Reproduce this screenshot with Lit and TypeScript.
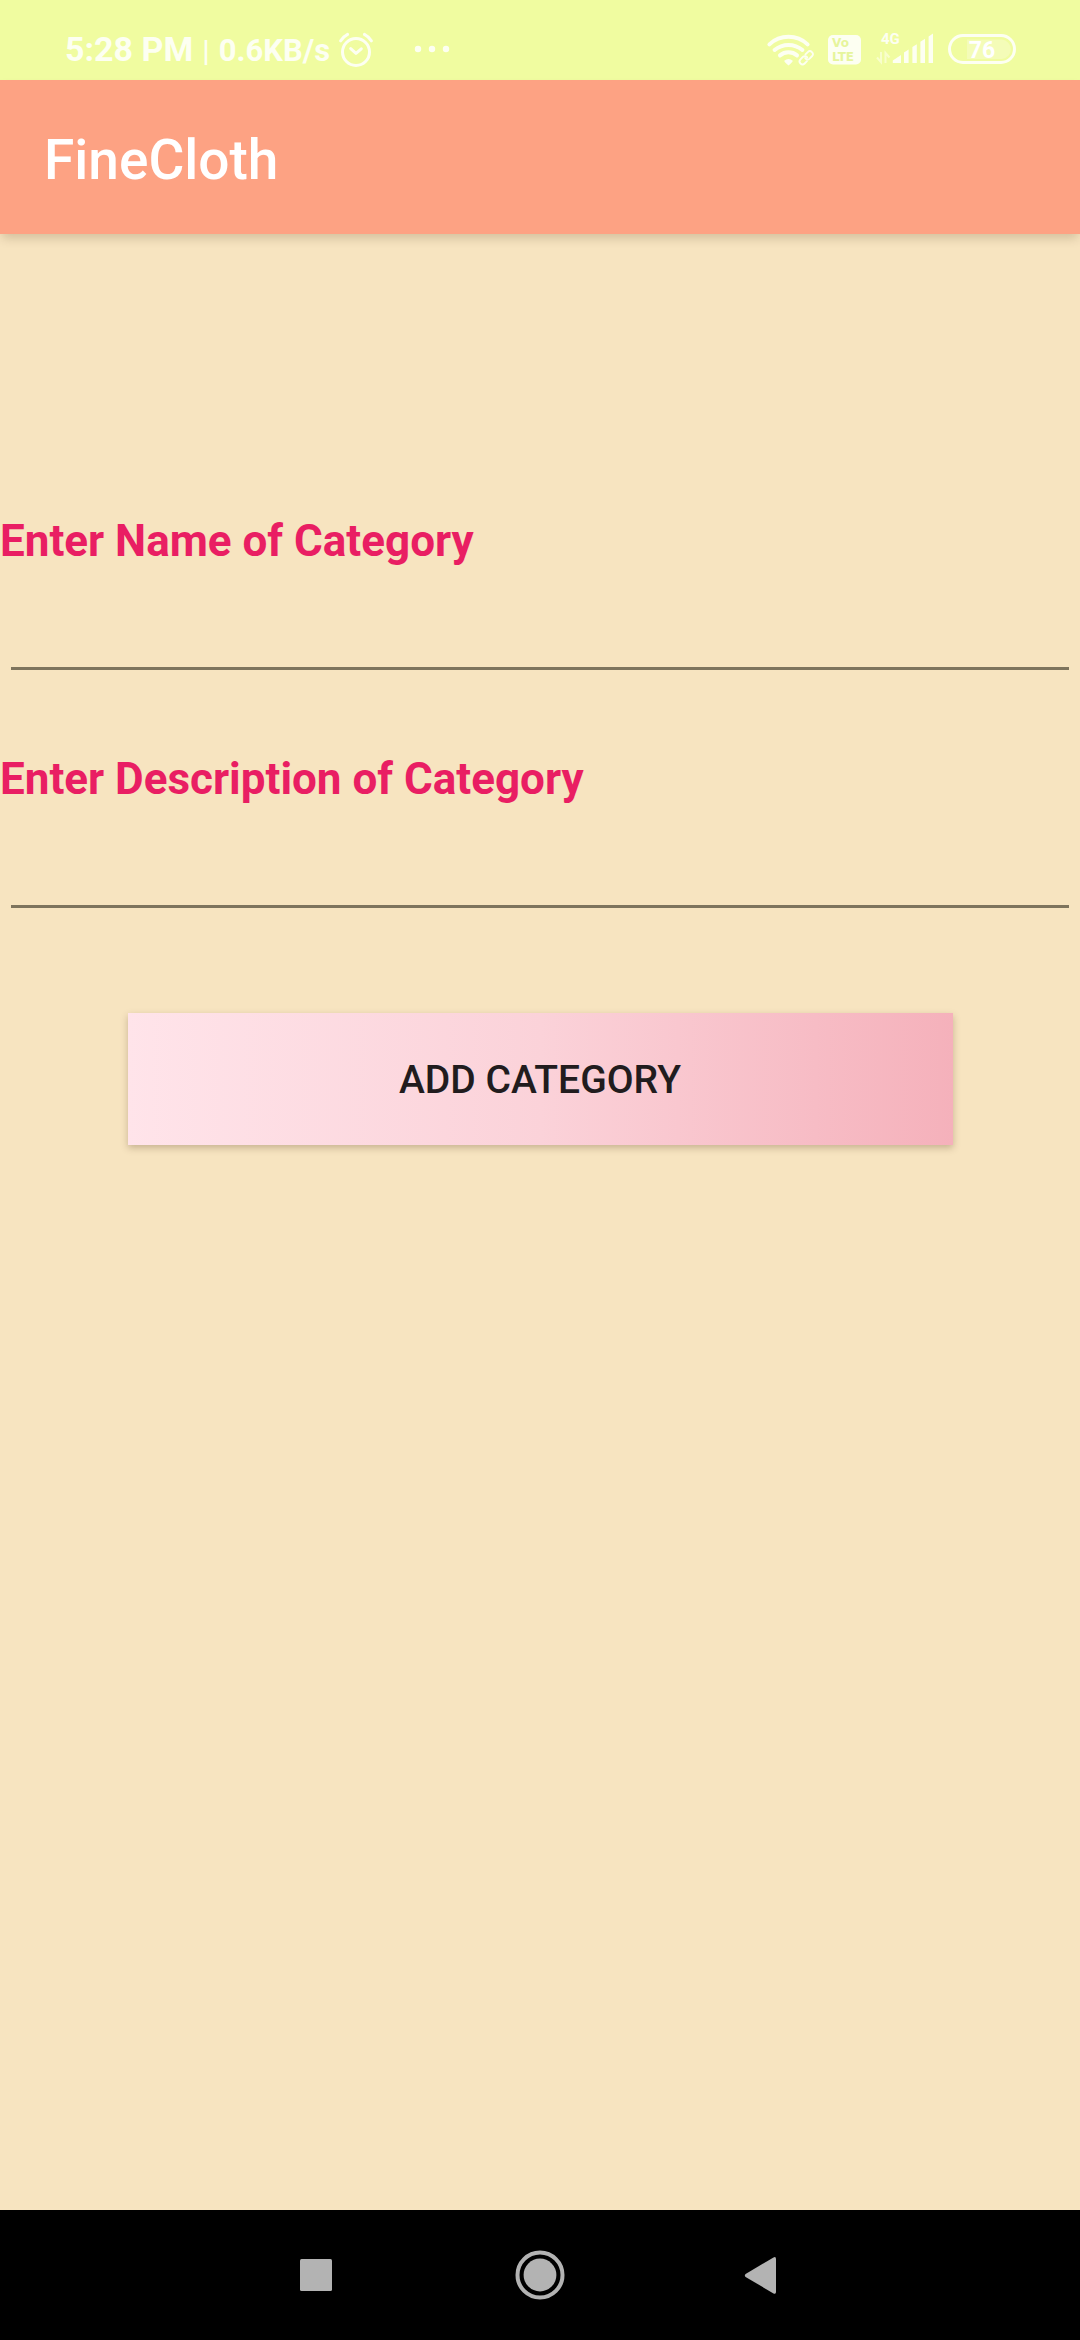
import { LitElement, html, css } from "lit";
import { customElement, property, state } from "lit/decorators.js";

@customElement("status-bar")
class StatusBar extends LitElement {
  static styles = css`
    :host {
      display: flex;
      justify-content: space-between;
      align-items: center;
      box-sizing: border-box;
      height: 80px;
      padding: 20px 64px 0 65px;
      background: #f0fca0;
      color: #fdfff2;
      font-family: Roboto, sans-serif;
      font-weight: 700;
    }
    .group {
      display: flex;
      align-items: center;
    }
    .readout {
      display: flex;
      align-items: baseline;
      gap: 9px;
      margin-right: 8px;
      line-height: 40px;
    }
    .time {
      font-size: 34px;
    }
    .rate {
      font-size: 31px;
    }
    .divider {
      font-size: 30px;
      font-weight: 500;
    }
    .dots {
      margin-left: 38px;
    }
    .indicators {
      gap: 14px;
    }
    svg {
      display: block;
      flex: none;
    }
    .line {
      fill: none;
      stroke: currentColor;
      stroke-linecap: round;
      stroke-linejoin: round;
    }
    .solid {
      fill: currentColor;
    }
    .faint {
      fill: none;
      stroke: #f8fecc;
      stroke-width: 2;
    }
    .gap {
      fill: #f0fca0;
      stroke: #f0fca0;
      stroke-width: 4;
    }
    .charge {
      fill: #f4fcb8;
    }
    .volte {
      fill: #e6f59c;
      font: 700 12px "DejaVu Sans", sans-serif;
    }
    .network {
      fill: currentColor;
      font: 700 15px Roboto, sans-serif;
    }
    .level {
      fill: #fff;
      font: 700 23px Roboto, sans-serif;
      text-anchor: middle;
    }
  `;

  render() {
    return html`
      <div class="group">
        <div class="readout">
          <span class="time">5:28 PM</span><span class="divider">|</span><span class="rate">0.6KB/s</span>
        </div>
        <svg width="36" height="36" viewBox="0 0 36 36" aria-hidden="true">
          <g class="line" stroke-width="3">
            <circle cx="18" cy="20" r="13.5"></circle>
            <path d="M12.7 16.6 18 21.4 23.3 16.8"></path>
            <path d="M2.6 8.8 Q5.4 4.6 9.6 2.4M26.4 2.4 Q30.6 4.6 33.4 8.8"></path>
          </g>
        </svg>
        <svg class="dots" width="38" height="36" viewBox="0 0 38 36" aria-hidden="true">
          <g class="solid">
            <circle cx="6" cy="17" r="3.2"></circle>
            <circle cx="20" cy="17" r="3.2"></circle>
            <circle cx="34" cy="17" r="3.2"></circle>
          </g>
        </svg>
      </div>
      <div class="group indicators">
        <svg width="48" height="36" viewBox="0 0 48 36" aria-hidden="true">
          <g class="line" stroke-width="4">
            <path d="M3.4 12.4A28 28 0 0 1 41.6 12.4"></path>
            <path d="M8.6 18A21.5 21.5 0 0 1 36.4 18"></path>
            <path d="M14 23.4A13.4 13.4 0 0 1 31 23.4"></path>
          </g>
          <path class="solid" d="M18.2 28.8Q22.5 25.4 26.8 28.8 26.4 30.4 22.5 33.4 18.6 30.4 18.2 28.8Z"></path>
          <g transform="translate(40.2 25.8) rotate(-45) scale(0.92)">
            <rect class="gap" x="-9" y="-3.2" width="18" height="6.4" rx="3.2"></rect>
            <g class="line" stroke-width="2">
              <path d="M-2 3.2H-5.6A3.2 3.2 0 0 1 -5.6 -3.2H-1.6A3 3 0 0 1 1 0.6"></path>
              <path d="M2 -3.2H5.6A3.2 3.2 0 0 1 5.6 3.2H1.6A3 3 0 0 1 -1 -0.6"></path>
            </g>
          </g>
        </svg>
        <svg width="34" height="36" viewBox="0 0 34 36" aria-hidden="true">
          <rect class="solid" x="0" y="3" width="33" height="29.5" rx="5"></rect>
          <text class="volte" x="4" y="14.5">Vo</text>
          <text class="volte" x="4" y="28.5">LTE</text>
        </svg>
        <svg width="58" height="44" viewBox="0 -4 58 44" aria-hidden="true">
          <text class="network" x="5" y="11.8">4G</text>
          <path class="faint" d="M5 20V30L1 25.5M9.5 31V21L13.5 25.5"></path>
          <path
            class="solid"
            d="M16.8 31V28.4L25 23V31ZM28 31V20.6L32.6 17.6V31ZM36.4 31V15L40.8 12.2V31ZM44.4 31V9.8L49 6.8V31ZM52.6 31V4.4L57 1.6V31Z"
          ></path>
        </svg>
        <svg width="68" height="36" viewBox="0 0 68 36" aria-hidden="true">
          <path class="charge" d="M19 7.5H54A9.8 9.8 0 0 1 54 27H19Z"></path>
          <rect class="line" x="1.5" y="3.5" width="65" height="27" rx="13.5" stroke-width="3"></rect>
          <text class="level" x="34" y="25.5">76</text>
        </svg>
      </div>
    `;
  }
}

@customElement("text-field")
class TextField extends LitElement {
  @property() label = "";
  @property() name = "";

  static styles = css`
    :host {
      display: flex;
      flex-direction: column;
      font-family: Roboto, sans-serif;
    }
    .label {
      color: #e91e63;
      font-size: 44px;
      font-weight: 700;
      line-height: 52px;
    }
    .input {
      box-sizing: border-box;
      height: 103px;
      margin: 0 11px;
      padding: 24px 0 16px;
      border: 0;
      border-bottom: 3px solid #7e745d;
      border-radius: 0;
      outline: 0;
      background: transparent;
      color: #211c1e;
      font: 400 48px Roboto, sans-serif;
    }
  `;

  render() {
    return html`
      <label class="label" for="field">${this.label}</label>
      <input class="input" id="field" type="text" name=${this.name} autocomplete="off" />
    `;
  }
}

@customElement("nav-bar")
class NavBar extends LitElement {
  static styles = css`
    :host {
      display: flex;
      justify-content: center;
      align-items: center;
      gap: 124px;
      height: 130px;
      background: #000;
    }
    .key {
      display: grid;
      place-items: center;
      width: 100px;
      height: 100px;
      padding: 0;
      border: 0;
      background: none;
      color: #b3b3b3;
    }
    .glyph {
      display: block;
      fill: currentColor;
    }
    .ring {
      fill: none;
      stroke: currentColor;
      stroke-width: 4;
    }
  `;

  render() {
    return html`
      <button class="key" aria-label="Recent apps">
        <svg class="glyph" width="50" height="50" viewBox="0 0 50 50">
          <rect x="9" y="9" width="32" height="32" rx="1.5"></rect>
        </svg>
      </button>
      <button class="key" aria-label="Home">
        <svg class="glyph" width="50" height="50" viewBox="0 0 50 50">
          <circle class="ring" cx="25" cy="25" r="22.5"></circle>
          <circle cx="25" cy="25" r="16.4"></circle>
        </svg>
      </button>
      <button class="key" aria-label="Back">
        <svg class="glyph" width="50" height="50" viewBox="0 0 50 50">
          <path d="M6.6 24 34.5 7.4Q37 6.4 37 9V42Q37 44.6 34.5 43.4L6.6 27Q5 25.5 6.6 24Z"></path>
        </svg>
      </button>
    `;
  }
}

@customElement("app-root")
class AppRoot extends LitElement {
  @state() private fields = [
    { name: "name", label: "Enter Name of Category" },
    { name: "description", label: "Enter Description of Category" },
  ];

  static styles = css`
    :host {
      display: flex;
      flex-direction: column;
      min-height: 100vh;
      background: #f7e4c0;
      font-family: Roboto, sans-serif;
    }
    .appbar {
      display: flex;
      align-items: center;
      height: 154px;
      padding: 0 44px;
      background: #fda283;
      box-shadow: 0 6px 10px -2px rgba(60, 40, 10, 0.2);
    }
    .title {
      margin: 0;
      padding-top: 6px;
      color: #fff;
      font-size: 55px;
      font-weight: 500;
      line-height: 64px;
    }
    .form {
      display: flex;
      flex: 1;
      flex-direction: column;
      gap: 83px;
      padding-top: 281px;
    }
    .submit {
      align-self: center;
      width: 825px;
      max-width: 100%;
      height: 132px;
      margin-top: 22px;
      padding: 2px 0 0;
      border: 0;
      background: linear-gradient(90deg, #ffe4ea, #fbd2d9 50%, #f5b1bb);
      box-shadow: 0 3px 7px rgba(60, 40, 10, 0.26);
      color: #211c1e;
      font: 500 39px Roboto, sans-serif;
      text-transform: uppercase;
    }
  `;

  render() {
    return html`
      <status-bar></status-bar>
      <header class="appbar"><h1 class="title">FineCloth</h1></header>
      <form class="form" @submit=${(e: Event) => e.preventDefault()}>
        ${this.fields.map((f) => html`<text-field .label=${f.label} .name=${f.name}></text-field>`)}
        <button class="submit" type="submit">Add Category</button>
      </form>
      <nav-bar></nav-bar>
    `;
  }
}
